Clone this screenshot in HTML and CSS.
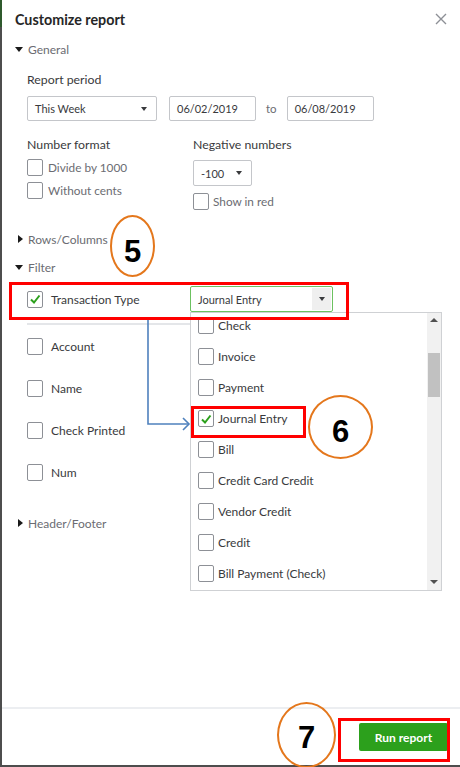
FILE: index.html
```html
<!DOCTYPE html>
<html lang="en">
<head>
    <meta charset="UTF-8">
    <meta name="viewport" content="width=device-width, initial-scale=1.0">
    <title>Customize report</title>
    <link rel="stylesheet" href="styles.css">
</head>
<body>
    <div class="dialog">
        <div class="dialog-header">
            <h1 class="dialog-title">Customize report</h1>
            <button class="close-btn" aria-label="Close">
                <svg width="12" height="12" viewBox="0 0 12 12"><path d="M1 1 L11 11 M11 1 L1 11" stroke="#8d9096" stroke-width="1.4" fill="none"/></svg>
            </button>
        </div>

        <div class="dialog-body">
            <div class="section-toggle"><span class="caret caret-down"></span>General</div>
            <div class="section">
                <div class="field-label">Report period</div>
                <div class="period-row">
                    <div class="select period-select">This Week<span class="select-arrow"></span></div>
                    <div class="select date-input">06/02/2019</div>
                    <span class="to">to</span>
                    <div class="select date-input">06/08/2019</div>
                </div>

                <div class="format-row">
                    <div class="format-col format-col-left">
                        <div class="col-label">Number format</div>
                        <label class="check-row muted"><span class="checkbox"></span>Divide by 1000</label>
                        <label class="check-row muted"><span class="checkbox"></span>Without cents</label>
                    </div>
                    <div class="format-col">
                        <div class="col-label">Negative numbers</div>
                        <div class="select neg-select">-100<span class="select-arrow"></span></div>
                        <label class="check-row red-row muted"><span class="checkbox"></span>Show in red</label>
                    </div>
                </div>
            </div>

            <div class="section-toggle rows-toggle"><span class="caret caret-right"></span>Rows/Columns</div>
            <div class="section-toggle filter-toggle"><span class="caret caret-down"></span>Filter</div>
            <div class="section">
                <div class="filter-row type-row">
                    <span class="checkbox checked">
                        <svg width="12" height="12" viewBox="0 0 12 12"><path d="M2 6.5 L5 9.5 L10.5 2.5" stroke="#2ca01c" stroke-width="2" fill="none"/></svg>
                    </span>
                    <span class="filter-name">Transaction Type</span>
                    <div class="select type-select">Journal Entry<span class="select-btn"><span class="select-arrow"></span></span></div>
                </div>
                <div class="divider"></div>
                <div class="filter-row"><span class="checkbox"></span><span class="filter-name">Account</span></div>
                <div class="filter-row"><span class="checkbox"></span><span class="filter-name">Name</span></div>
                <div class="filter-row"><span class="checkbox"></span><span class="filter-name">Check Printed</span></div>
                <div class="filter-row"><span class="checkbox"></span><span class="filter-name">Num</span></div>
            </div>
            <div class="section-toggle header-toggle"><span class="caret caret-right"></span>Header/Footer</div>
        </div>

        <div class="dialog-footer">
            <button class="run-btn">Run report</button>
        </div>

        <!-- open dropdown of the transaction type select -->
        <div class="dropdown">
            <div class="options">
                <div class="option"><span class="checkbox"></span>Check</div>
                <div class="option"><span class="checkbox"></span>Invoice</div>
                <div class="option"><span class="checkbox"></span>Payment</div>
                <div class="option">
                    <span class="checkbox checked">
                        <svg width="12" height="12" viewBox="0 0 12 12"><path d="M2 6.5 L5 9.5 L10.5 2.5" stroke="#2ca01c" stroke-width="2" fill="none"/></svg>
                    </span>Journal Entry
                </div>
                <div class="option"><span class="checkbox"></span>Bill</div>
                <div class="option"><span class="checkbox"></span>Credit Card Credit</div>
                <div class="option"><span class="checkbox"></span>Vendor Credit</div>
                <div class="option"><span class="checkbox"></span>Credit</div>
                <div class="option"><span class="checkbox"></span>Bill Payment (Check)</div>
            </div>
            <div class="scrollbar">
                <span class="scroll-up"></span>
                <span class="scroll-thumb"></span>
                <span class="scroll-down"></span>
            </div>
        </div>

        <!-- step markers -->
        <svg class="link-arrow" width="56" height="114" viewBox="0 0 56 114">
            <path d="M8 2 V106 H49" stroke="#4f81bd" stroke-width="1.6" fill="none"/>
            <path d="M43 100 L49 106 L43 112" stroke="#4f81bd" stroke-width="1.6" fill="none"/>
        </svg>
        <div class="mark mark-type"></div>
        <div class="mark mark-entry"></div>
        <div class="mark mark-run"></div>
        <div class="step step-5">5</div>
        <div class="step step-6">6</div>
        <div class="step step-7">7</div>
    </div>
</body>
</html>
```

FILE: styles.css
```css
* {
    box-sizing: border-box;
}

body {
    margin: 0;
    font-family: Lato, "Noto Sans", sans-serif;
    color: #393a3d;
    background: #fff;
}

.dialog {
    position: relative;
    width: 460px;
    height: 767px;
    display: flex;
    flex-direction: column;
    border-left: 2px solid #4d4d4d;
    border-bottom: 2px solid #4d4d4d;
}

.dialog::before {
    content: "";
    position: absolute;
    left: -2px;
    top: 0;
    width: 2px;
    height: 27px;
    background: #2f5a2d;
}

.dialog-header {
    height: 38px;
    padding: 0 13px;
    display: flex;
    align-items: center;
    justify-content: space-between;
}

.dialog-title {
    margin: 0;
    font-size: 14.3px;
    font-weight: 700;
    color: #262626;
}

.close-btn {
    background: none;
    border: none;
    padding: 0;
    display: flex;
}

.dialog-body {
    padding: 0 13px;
}

.section-toggle {
    height: 22px;
    display: flex;
    align-items: center;
    font-size: 12px;
    color: #6b6c72;
}

.caret {
    width: 0;
    height: 0;
}

.caret-down {
    border-left: 4px solid transparent;
    border-right: 4px solid transparent;
    border-top: 5px solid #1a1a1a;
    margin-right: 5px;
}

.caret-right {
    border-top: 4px solid transparent;
    border-bottom: 4px solid transparent;
    border-left: 5px solid #1a1a1a;
    margin: 0 5px 0 3px;
}

.rows-toggle {
    margin-top: 18px;
}

.filter-toggle {
    margin-top: 6px;
}

.header-toggle {
    margin-top: 19px;
}

.section {
    padding-left: 12px;
}

.field-label {
    margin-top: 10px;
    height: 20px;
    line-height: 20px;
    font-size: 12.3px;
}

.period-row {
    margin-top: 6px;
    display: flex;
    align-items: center;
}

.select {
    position: relative;
    height: 25px;
    display: flex;
    align-items: center;
    padding-left: 7px;
    border: 1px solid #c4c6ca;
    border-radius: 2px;
    font-size: 11px;
    color: #393a3d;
    background: #fff;
}

.select-arrow {
    position: absolute;
    right: 9px;
    top: 50%;
    margin-top: -2px;
    border-left: 3.5px solid transparent;
    border-right: 3.5px solid transparent;
    border-top: 4px solid #393a3d;
}

.period-select {
    width: 130px;
}

.date-input {
    width: 87px;
    margin-left: 12px;
}

.to {
    margin: 0 10px;
    font-size: 11.5px;
    color: #6b6c72;
}

.date-input + .to + .date-input {
    margin-left: 0;
}

.format-row {
    margin-top: 14px;
    display: flex;
}

.format-col-left {
    width: 166px;
}

.col-label {
    height: 20px;
    line-height: 20px;
    font-size: 12.3px;
}

.check-row {
    height: 23px;
    display: flex;
    align-items: center;
    font-size: 11.8px;
}

.check-row:first-of-type {
    margin-top: 1px;
}

.check-row .checkbox {
    margin-right: 5px;
}

.muted {
    color: #6b6c72;
}

.neg-select {
    width: 59px;
    height: 26px;
    margin-top: 5px;
}

.check-row.red-row {
    margin-top: 6px;
    height: 18px;
}

.red-row .checkbox {
    margin-right: 4px;
}

.checkbox {
    flex: none;
    width: 16px;
    height: 17px;
    border: 1px solid #8d9096;
    border-radius: 2px;
    display: flex;
    align-items: center;
    justify-content: center;
    background: #fff;
}

.filter-row {
    height: 42px;
    display: flex;
    align-items: center;
    font-size: 12px;
}

.filter-name {
    margin-left: 8px;
}

.type-row {
    margin-top: 8px;
    height: 26px;
}

.type-row .filter-name {
    width: 139px;
}

.type-select {
    width: 143px;
    height: 26px;
    border-color: #6cc160;
}

.select-btn {
    position: absolute;
    right: 1px;
    top: 1px;
    bottom: 1px;
    width: 19px;
    background: #efefef;
}

.select-btn .select-arrow {
    right: 6px;
}

.divider {
    margin-top: 11px;
    width: 300px;
    height: 2px;
    background: #e4e6e9;
}

.dialog-footer {
    margin-top: auto;
    height: 58px;
    border-top: 2px solid #eceef1;
    padding: 14px 12px 0 0;
    display: flex;
    justify-content: flex-end;
    align-items: flex-start;
}

.run-btn {
    width: 89px;
    height: 28px;
    border: none;
    border-radius: 2px;
    background: #2ca01c;
    color: #fff;
    font-family: Lato, "Noto Sans", sans-serif;
    font-size: 12px;
    font-weight: 700;
}

/* open menu of the transaction type select */
.dropdown {
    position: absolute;
    left: 188px;
    top: 312px;
    width: 252px;
    height: 279px;
    border: 1px solid #cfd1d4;
    background: #fff;
    overflow: hidden;
}

.options {
    margin-top: -3px;
    padding-left: 7px;
}

.option {
    height: 31px;
    display: flex;
    align-items: center;
    font-size: 12px;
}

.option .checkbox {
    margin-right: 4px;
}

.scrollbar {
    position: absolute;
    top: 0;
    right: 0;
    bottom: 0;
    width: 14px;
    background: #f1f1f1;
}

.scroll-up,
.scroll-down {
    position: absolute;
    left: 3px;
    border-left: 4px solid transparent;
    border-right: 4px solid transparent;
}

.scroll-up {
    top: 5px;
    border-bottom: 4px solid #505050;
}

.scroll-down {
    bottom: 6px;
    border-top: 4px solid #505050;
}

.scroll-thumb {
    position: absolute;
    left: 1px;
    right: 1px;
    top: 40px;
    height: 44px;
    background: #c1c1c1;
}

/* annotations drawn on top of the dialog */
.link-arrow {
    position: absolute;
    left: 138px;
    top: 318px;
}

.mark {
    position: absolute;
    border: 3px solid #ff0000;
}

.mark-type {
    left: 7px;
    top: 282px;
    width: 340px;
    height: 38px;
}

.mark-entry {
    left: 189px;
    top: 406px;
    width: 115px;
    height: 32px;
}

.mark-run {
    left: 336px;
    top: 718px;
    width: 112px;
    height: 44px;
}

.step {
    position: absolute;
    border: 2px solid #e4771c;
    border-radius: 50%;
    display: flex;
    align-items: center;
    justify-content: center;
    font-family: "Liberation Sans", Arial, sans-serif;
    font-size: 31px;
    font-weight: 700;
    color: #000;
}

.step-5 {
    left: 108px;
    top: 215px;
    width: 45px;
    height: 62px;
    padding-top: 12px;
}

.step-6 {
    left: 306px;
    top: 395px;
    width: 65px;
    height: 64px;
    padding-top: 10px;
}

.step-7 {
    left: 275px;
    top: 702px;
    width: 59px;
    height: 66px;
    padding-top: 6px;
}
```
